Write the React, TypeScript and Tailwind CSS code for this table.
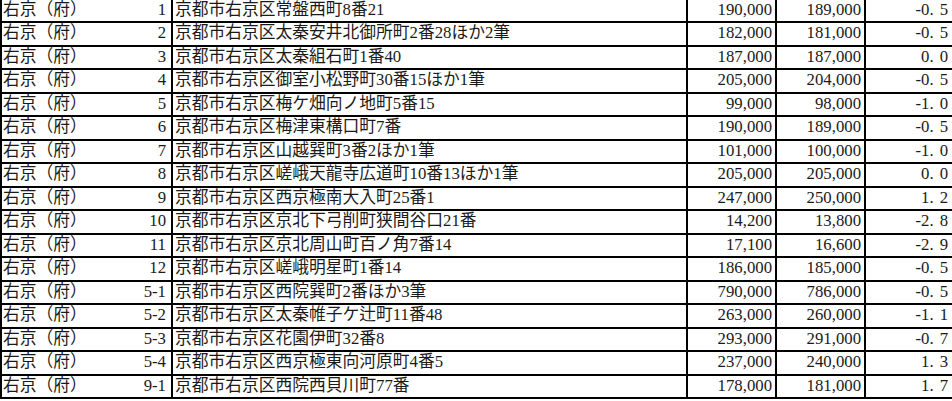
const rows: [string, string, string, string, string][] = [
  ["1", "京都市右京区常盤西町8番21", "190,000", "189,000", "-0.5"],
  ["2", "京都市右京区太秦安井北御所町2番28ほか2筆", "182,000", "181,000", "-0.5"],
  ["3", "京都市右京区太秦組石町1番40", "187,000", "187,000", "0.0"],
  ["4", "京都市右京区御室小松野町30番15ほか1筆", "205,000", "204,000", "-0.5"],
  ["5", "京都市右京区梅ケ畑向ノ地町5番15", "99,000", "98,000", "-1.0"],
  ["6", "京都市右京区梅津東構口町7番", "190,000", "189,000", "-0.5"],
  ["7", "京都市右京区山越巽町3番2ほか1筆", "101,000", "100,000", "-1.0"],
  ["8", "京都市右京区嵯峨天龍寺広道町10番13ほか1筆", "205,000", "205,000", "0.0"],
  ["9", "京都市右京区西京極南大入町25番1", "247,000", "250,000", "1.2"],
  ["10", "京都市右京区京北下弓削町狭間谷口21番", "14,200", "13,800", "-2.8"],
  ["11", "京都市右京区京北周山町百ノ角7番14", "17,100", "16,600", "-2.9"],
  ["12", "京都市右京区嵯峨明星町1番14", "186,000", "185,000", "-0.5"],
  ["5-1", "京都市右京区西院巽町2番ほか3筆", "790,000", "786,000", "-0.5"],
  ["5-2", "京都市右京区太秦帷子ケ辻町11番48", "263,000", "260,000", "-1.1"],
  ["5-3", "京都市右京区花園伊町32番8", "293,000", "291,000", "-0.7"],
  ["5-4", "京都市右京区西京極東向河原町4番5", "237,000", "240,000", "1.3"],
  ["9-1", "京都市右京区西院西貝川町77番", "178,000", "181,000", "1.7"],
];

const Change = ({ value }: { value: string }) => {
  const [int, dec] = value.split(".");
  return (
    <span>
      {int}.<span className="ml-[6px]">{dec}</span>
    </span>
  );
};

export default function App() {
  return (
    <div
      className="w-[952px] h-[401px] overflow-hidden bg-white text-[#1a1a1a] text-[16.75px] leading-none"
      style={{ fontFamily: '"Liberation Serif", "Noto Sans CJK JP", serif' }}
    >
      <div className="-mt-[2px] border-t-2 border-black">
        {rows.map((r, i) => (
          <div
            key={i}
            className={`flex border-l-2 border-b-2 border-black ${
              i === 0 ? "h-[23px]" : "h-[23.5px]"
            }`}
          >
            <div className="w-[171px] shrink-0 flex items-center justify-between border-r-2 border-black pl-[1px] pr-[5px]">
              <span>右京（府）</span>
              <span>{r[0]}</span>
            </div>
            <div className="w-[515px] shrink-0 flex items-center border-r-2 border-black pl-[2px] whitespace-nowrap">
              {r[1]}
            </div>
            <div className="w-[89px] shrink-0 flex items-center justify-end border-r-2 border-black pr-[3px]">
              {r[2]}
            </div>
            <div className="w-[89px] shrink-0 flex items-center justify-end border-r-2 border-black pr-[3px]">
              {r[3]}
            </div>
            <div className="flex-1 flex items-center justify-end pr-[4px]">
              <Change value={r[4]} />
            </div>
          </div>
        ))}
      </div>
    </div>
  );
}
